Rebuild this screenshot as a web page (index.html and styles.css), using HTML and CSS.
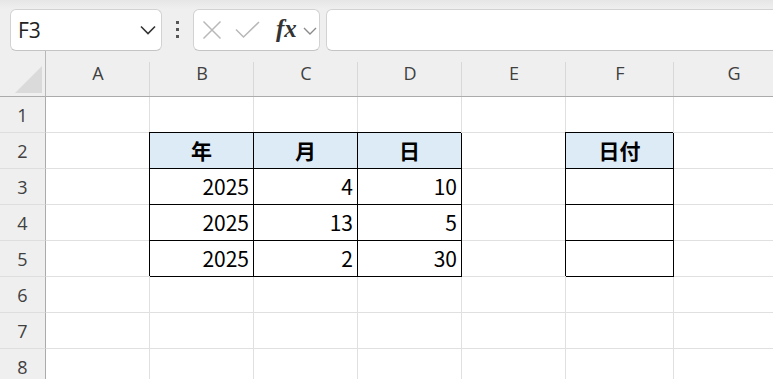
FILE: index.html
```html
<!DOCTYPE html>
<html lang="ja">
<head>
  <meta charset="UTF-8" />
  <title>Sheet1</title>
  <link rel="stylesheet" href="styles.css">
</head>
<body>
  <div class="toolbar">
    <div class="name-box">
      <span>F3</span>
      <svg width="16" height="10" viewBox="0 0 16 10"><polyline points="1,1.5 8,8.5 15,1.5" fill="none" stroke="#333" stroke-width="1.6"/></svg>
    </div>
    <div class="dots"><i></i><i></i><i></i></div>
    <div class="formula-btns">
      <svg class="cancel" width="20" height="20" viewBox="0 0 20 20"><path d="M1.5 1.5 L18.5 18.5 M18.5 1.5 L1.5 18.5" stroke="#b8b8b8" stroke-width="1.5" fill="none"/></svg>
      <svg class="enter" width="25" height="18" viewBox="0 0 25 18"><polyline points="1,8.5 8.5,16 24,1" fill="none" stroke="#b8b8b8" stroke-width="1.5"/></svg>
      <span class="fx">fx</span>
      <svg class="more" width="14" height="8" viewBox="0 0 14 8"><polyline points="1,1 7,7 13,1" fill="none" stroke="#8a8a8a" stroke-width="1.4"/></svg>
    </div>
    <div class="formula-input"></div>
  </div>

  <div class="sheet">
    <div class="corner"><svg width="27" height="27" viewBox="0 0 27 27"><polygon points="27,0 27,27 0,27" fill="#dadada"/></svg></div>
    <div class="col-head">A</div>
    <div class="col-head">B</div>
    <div class="col-head">C</div>
    <div class="col-head">D</div>
    <div class="col-head">E</div>
    <div class="col-head">F</div>
    <div class="col-head">G</div>

    <div class="row-head">1</div>
    <div class="cell"></div><div class="cell"></div><div class="cell"></div><div class="cell"></div><div class="cell"></div><div class="cell"></div><div class="cell"></div>

    <div class="row-head">2</div>
    <div class="cell"></div>
    <div class="cell box head">年</div>
    <div class="cell box head">月</div>
    <div class="cell box head">日</div>
    <div class="cell"></div>
    <div class="cell box head">日付</div>
    <div class="cell"></div>

    <div class="row-head">3</div>
    <div class="cell"></div>
    <div class="cell box num">2025</div>
    <div class="cell box num">4</div>
    <div class="cell box num">10</div>
    <div class="cell"></div>
    <div class="cell box"></div>
    <div class="cell"></div>

    <div class="row-head">4</div>
    <div class="cell"></div>
    <div class="cell box num">2025</div>
    <div class="cell box num">13</div>
    <div class="cell box num">5</div>
    <div class="cell"></div>
    <div class="cell box"></div>
    <div class="cell"></div>

    <div class="row-head">5</div>
    <div class="cell"></div>
    <div class="cell box num">2025</div>
    <div class="cell box num">2</div>
    <div class="cell box num">30</div>
    <div class="cell"></div>
    <div class="cell box"></div>
    <div class="cell"></div>

    <div class="row-head">6</div>
    <div class="cell"></div><div class="cell"></div><div class="cell"></div><div class="cell"></div><div class="cell"></div><div class="cell"></div><div class="cell"></div>

    <div class="row-head">7</div>
    <div class="cell"></div><div class="cell"></div><div class="cell"></div><div class="cell"></div><div class="cell"></div><div class="cell"></div><div class="cell"></div>

    <div class="row-head">8</div>
    <div class="cell"></div><div class="cell"></div><div class="cell"></div><div class="cell"></div><div class="cell"></div><div class="cell"></div><div class="cell"></div>
  </div>
</body>
</html>
```

FILE: styles.css
```css
body {
  margin: 0;
  width: 773px;
  height: 379px;
  overflow: hidden;
  background-color: #ffffff;
  font-family: 'Noto Sans CJK JP', sans-serif;
}

/* formula bar */
.toolbar {
  display: flex;
  height: 51px;
  box-sizing: border-box;
  padding: 9px 0 0 10px;
  background: linear-gradient(#e6e6e6, #efefef 9px) #efefef;
}

.toolbar > * {
  flex-shrink: 0;
}

.name-box,
.formula-btns,
.formula-input {
  background-color: #ffffff;
  border: 1px solid #d2d2d2;
  border-bottom-color: #c4c4c4;
  border-radius: 6px;
  box-sizing: border-box;
  height: 42px;
}

.name-box {
  width: 152px;
  display: flex;
  align-items: center;
  justify-content: space-between;
  padding: 0 5px 0 7px;
  font-family: 'Open Sans', sans-serif;
  font-size: 21px;
  color: #222;
}

.dots {
  width: 31px;
  display: flex;
  flex-direction: column;
  align-items: center;
  gap: 4px;
  padding-top: 12px;
}

.dots i {
  display: block;
  width: 3px;
  height: 3px;
  background-color: #555;
}

.formula-btns {
  width: 127px;
  display: flex;
  align-items: center;
  padding-left: 8px;
}

.formula-btns .enter {
  margin-left: 13px;
}

.fx {
  margin-left: 16px;
  font-family: 'Liberation Serif', serif;
  font-style: italic;
  font-weight: bold;
  font-size: 25px;
  color: #333;
  line-height: 1;
  margin-top: -3px;
}

.formula-btns .more {
  margin-left: 6px;
  margin-top: 2px;
}

.formula-input {
  width: 470px;
  margin-left: 6px;
  border-top-right-radius: 0;
  border-bottom-right-radius: 0;
}

/* grid */
.sheet {
  display: grid;
  grid-template-columns: 46px 104px 104px 104px 104px 104px 108px 120px;
  grid-template-rows: 46px;
  grid-auto-rows: 36px;
}

.sheet > div {
  box-sizing: border-box;
}

.corner {
  background-color: #efefef;
  border-right: 1px solid #b8b8b8;
  border-bottom: 1px solid #ababab;
  display: flex;
  align-items: flex-end;
  justify-content: flex-end;
  padding: 0 3px 3px 0;
}

.col-head {
  background: linear-gradient(#d8d8d8, #d8d8d8) no-repeat right bottom / 1px 34px, #efefef;
  border-bottom: 1px solid #ababab;
  font-family: 'Open Sans', sans-serif;
  font-size: 18px;
  color: #404040;
  text-align: center;
  line-height: 44px;
}

.row-head {
  background-color: #efefef;
  border-right: 1px solid #ababab;
  border-bottom: 1px solid #dedede;
  font-family: 'Open Sans', sans-serif;
  font-size: 18px;
  color: #404040;
  text-align: center;
  line-height: 36px;
}

.cell {
  border-right: 1px solid #e0e0e0;
  border-bottom: 1px solid #e0e0e0;
  font-size: 21px;
  line-height: 34px;
  color: #000;
}

.cell.box {
  border-color: #000;
  box-shadow: -1px -1px 0 #000;
}

.cell.head {
  background-color: #ddebf7;
  font-weight: bold;
  text-align: center;
}

.cell.num {
  text-align: right;
  padding-right: 4px;
}
```
